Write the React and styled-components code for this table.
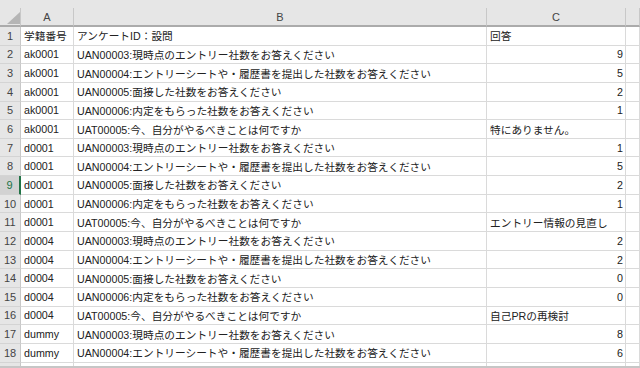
import React from 'react';
import styled, { createGlobalStyle, css } from 'styled-components';

const GlobalStyle = createGlobalStyle`
  body {
    margin: 0;
    background: #ffffff;
  }
`;

const Q3 = 'UAN00003:現時点のエントリー社数をお答えください';
const Q4 = 'UAN00004:エントリーシートや・履歴書を提出した社数をお答えください';
const Q5 = 'UAN00005:面接した社数をお答えください';
const Q6 = 'UAN00006:内定をもらった社数をお答えください';
const T5 = 'UAT00005:今、自分がやるべきことは何ですか';

const rows = [
  ['学籍番号', 'アンケートID：設問', '回答'],
  ['ak0001', Q3, 9],
  ['ak0001', Q4, 5],
  ['ak0001', Q5, 2],
  ['ak0001', Q6, 1],
  ['ak0001', T5, '特にありません。'],
  ['d0001', Q3, 1],
  ['d0001', Q4, 5],
  ['d0001', Q5, 2],
  ['d0001', Q6, 1],
  ['d0001', T5, 'エントリー情報の見直し'],
  ['d0004', Q3, 2],
  ['d0004', Q4, 2],
  ['d0004', Q5, 0],
  ['d0004', Q6, 0],
  ['d0004', T5, '自己PRの再検討'],
  ['dummy', Q3, 8],
  ['dummy', Q4, 6],
  ['dummy', Q5, 1],
];

const ACTIVE_ROW = 9;

export default function App() {
  return (
    <>
      <GlobalStyle />
      <Sheet>
        <TopStrip />
        <Corner />
        <ColHead>A</ColHead>
        <ColHead>B</ColHead>
        <ColHead>C</ColHead>
        <ColHead />
        {rows.map(([id, question, answer], i) => {
          const n = i + 1;
          const numeric = typeof answer === 'number';
          return (
            <React.Fragment key={n}>
              <RowHead $active={n === ACTIVE_ROW}>{n}</RowHead>
              <Cell>{id}</Cell>
              <Cell>{question}</Cell>
              <Cell $right={numeric}>{answer}</Cell>
              <Cell />
            </React.Fragment>
          );
        })}
      </Sheet>
    </>
  );
}

const Sheet = styled.div`
  width: 640px;
  height: 368px;
  box-sizing: border-box;
  overflow: hidden;
  display: grid;
  grid-template-columns: 21px 53px 413px 139px 14px;
  grid-template-rows: 8px 19px;
  grid-auto-rows: 18.65px;
  align-content: start;
  background: #ffffff;
  border-bottom: 2px solid #c6c6c6;
  font-family: "Liberation Sans", "Noto Sans CJK JP", sans-serif;
  font-size: 10.7px;
  color: #222222;
`;

const TopStrip = styled.div`
  grid-column: 1 / -1;
  background: #e6e6e6;
`;

const headBase = css`
  background: #e6e6e6;
  color: #444444;
  display: flex;
  align-items: center;
  justify-content: center;
  box-sizing: border-box;
  font-size: 11px;
`;

const Corner = styled.div`
  ${headBase};
  position: relative;
  border-right: 1px solid #c8c8c8;
  border-bottom: 2px solid #ababab;

  &::after {
    content: '';
    position: absolute;
    left: 7px;
    top: 4px;
    width: 13px;
    height: 12px;
    background: #b5b5b5;
    clip-path: polygon(100% 0, 100% 100%, 0 100%);
  }
`;

const ColHead = styled.div`
  ${headBase};
  border-right: 1px solid #c8c8c8;
  border-bottom: 2px solid #ababab;
`;

const RowHead = styled.div`
  ${headBase};
  border-bottom: 1px solid #d4d4d4;
  border-right: 1px solid #c8c8c8;
  ${(p) =>
    p.$active &&
    css`
      background: #d2d2d2;
      color: #217346;
      border-right: 2px solid #217346;
    `}
`;

const Cell = styled.div`
  box-sizing: border-box;
  display: flex;
  align-items: center;
  justify-content: ${(p) => (p.$right ? 'flex-end' : 'flex-start')};
  padding: 0 ${(p) => (p.$right ? '2px' : '0')} 0 ${(p) => (p.$right ? '0' : '3px')};
  border-right: 1px solid #dadada;
  border-bottom: 1px solid #dadada;
  white-space: nowrap;
  overflow: hidden;
`;
